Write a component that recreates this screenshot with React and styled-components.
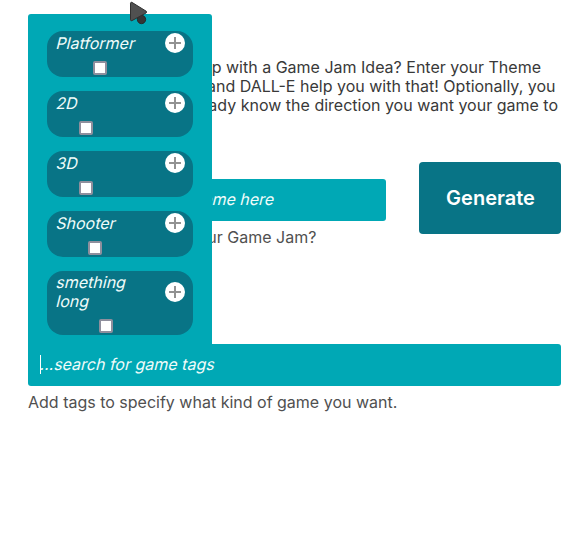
import React from "react";
import styled, { createGlobalStyle } from "styled-components";

const GlobalStyle = createGlobalStyle`
  * { box-sizing: border-box; }
  body {
    margin: 0;
    background: #fff;
    font-family: Inter, "Liberation Sans", sans-serif;
    font-size: 16px;
    line-height: 19px;
    overflow: hidden;
  }
`;

const Page = styled.main`
  position: relative;
  display: flex;
  flex-direction: column;
  width: 586px;
  height: 554px;
  padding: 58px 25px 0 28px;
`;

const Intro = styled.div`
  display: flex;
  flex-direction: column;
  align-items: flex-end;
  height: 104px;
  color: #393939;
`;

const IntroLine = styled.p`
  margin: 0 ${(p) => p.$end}px 0 0;
  white-space: nowrap;
`;

const ThemeRow = styled.section`
  display: flex;
  justify-content: space-between;
  height: 182px;
`;

const ThemeField = styled.div`
  width: 358px;
  padding-top: 17px;
`;

const Field = styled.div`
  display: flex;
  align-items: center;
  flex: none;
  height: 42px;
  padding: 0 12px 1px;
  border-radius: ${(p) => (p.$attached ? "0 3px 3px 3px" : "3px")};
  background: #00a8b5;
`;

const SlantedText = styled.span`
  display: inline-block;
  color: #f0fcfa;
  font-weight: 380;
  white-space: nowrap;
  transform: translateX(-0.7px) skewX(-14deg);
  transform-origin: 0 15px;
`;

const ThemePlaceholder = styled(SlantedText)`
  margin: 0 100.3px 0 auto;
`;

const Hint = styled.p`
  margin: 7px 0 0;
  color: #505050;
`;

const ThemeHint = styled(Hint)`
  margin-right: 69.6px;
  text-align: right;
`;

const GenerateButton = styled.button`
  width: 142px;
  height: 72px;
  padding: 0 0 0 1px;
  border: 0;
  border-radius: 4px;
  background: #087486;
  color: #fff;
  font: 600 20px/24px Inter, "Liberation Sans", sans-serif;
`;

const Caret = styled.span`
  width: 1px;
  height: 19px;
  margin-right: -1px;
  background: #fff;
`;

const TagMenu = styled.div`
  position: absolute;
  top: 14px;
  left: 28px;
  display: flex;
  flex-direction: column;
  gap: 14px;
  width: 184px;
  height: 331px;
  padding: 17px 19px 0;
  border-radius: 3px 3px 0 0;
  background: #00a8b5;
`;

const Tag = styled.div`
  display: flex;
  align-items: flex-start;
  justify-content: space-between;
  height: ${(p) => (p.$tall ? 64 : 46)}px;
  padding: ${(p) => (p.$tall ? 2 : 3)}px 8px 0 9px;
  border-radius: 16px;
  background: #087486;
`;

const TagContent = styled.div`
  display: flex;
  flex-direction: column;
  align-items: flex-start;
  width: 90px;
`;

const Checkbox = styled.span`
  width: 14px;
  height: 14px;
  margin: 8px 0 0 ${(p) => p.$indent}px;
  border: 2px solid #8f8f9d;
  border-radius: 2px;
  background: #fff;
`;

const AddButton = styled.button`
  width: 20px;
  height: 20px;
  margin-top: ${(p) => (p.$tall ? 9 : -1)}px;
  padding: 0;
  border: 0;
  border-radius: 50%;
  background: #fff;
`;

const AddIcon = styled.svg`
  display: block;
`;

const Pointer = styled.svg`
  position: absolute;
  top: 0;
  left: 128px;
`;

const tags = [
  { lines: ["Platformer"], indent: 37 },
  { lines: ["2D"], indent: 23 },
  { lines: ["3D"], indent: 23 },
  { lines: ["Shooter"], indent: 32.4 },
  { lines: ["smething", "long"], indent: 43 },
];

function TagItem({ lines, indent }) {
  const tall = lines.length > 1;
  return (
    <Tag $tall={tall}>
      <TagContent>
        {lines.map((line) => (
          <SlantedText key={line}>{line}</SlantedText>
        ))}
        <Checkbox $indent={indent} />
      </TagContent>
      <AddButton $tall={tall} aria-label={`Add ${lines.join(" ")}`}>
        <AddIcon width="20" height="20" viewBox="0 0 20 20">
          <path d="M4 10h12M10 4v12" stroke="#929292" strokeWidth="2" />
        </AddIcon>
      </AddButton>
    </Tag>
  );
}

export default function App() {
  return (
    <>
      <GlobalStyle />
      <Page>
        <Intro>
          <IntroLine $end={20}>help with a Game Jam Idea? Enter your Theme</IntroLine>
          <IntroLine $end={5.5}>and DALL-E help you with that! Optionally, you</IntroLine>
          <IntroLine $end={3}>already know the direction you want your game to</IntroLine>
        </Intro>
        <ThemeRow>
          <ThemeField>
            <Field>
              <ThemePlaceholder>Theme here</ThemePlaceholder>
            </Field>
            <ThemeHint>your Game Jam?</ThemeHint>
          </ThemeField>
          <GenerateButton>Generate</GenerateButton>
        </ThemeRow>
        <Field $attached>
          <Caret />
          <SlantedText>...search for game tags</SlantedText>
        </Field>
        <Hint>Add tags to specify what kind of game you want.</Hint>
        <TagMenu>
          {tags.map((tag) => (
            <TagItem key={tag.lines[0]} {...tag} />
          ))}
        </TagMenu>
        <Pointer width="24" height="28" viewBox="0 0 24 28">
          <circle cx="13.5" cy="19.5" r="4.2" fill="#353535" stroke="#222" strokeWidth="0.8" />
          <path
            d="M3.8 2.3 18.2 11.2Q19.1 12 18.2 12.9L3.8 20.7Q2.6 21 2.5 19.8V3.2Q2.7 2 3.8 2.3Z"
            fill="#505050"
            stroke="#303030"
            strokeWidth="1"
          />
        </Pointer>
      </Page>
    </>
  );
}
